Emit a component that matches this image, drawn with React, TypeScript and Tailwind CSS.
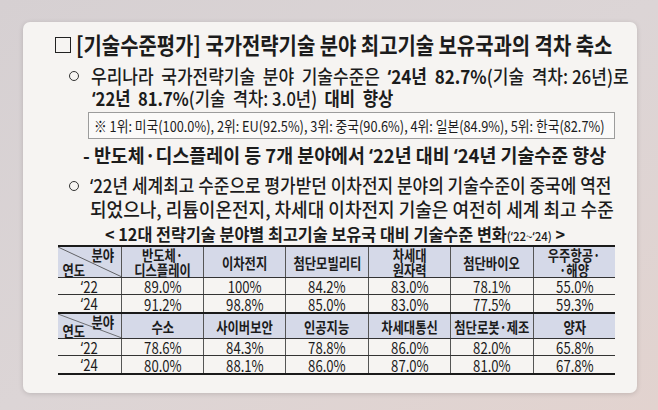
import type { ReactNode } from 'react';

const FONT = '"Noto Sans CJK KR", "Noto Sans", sans-serif';

// CJK font draws ‘ full-width, so the quote takes a latin face
function Q() {
  return <span className="font-['Noto_Sans']">‘</span>;
}

// condensed text: Korean headline fonts in the source are narrow
function Cn({ children, className = '' }: { children: ReactNode; className?: string }) {
  return <span className={`inline-block whitespace-nowrap origin-left ${className}`}>{children}</span>;
}

function Cell({ children, className = '' }: { children: ReactNode; className?: string }) {
  return (
    <span className={`inline-block whitespace-nowrap text-center scale-x-[0.82] ${className}`}>{children}</span>
  );
}

function Circle() {
  return <span className="inline-block w-[10px] h-[10px] rounded-full border-[1.5px] border-[#333] shrink-0" />;
}

type Section = { heads: string[][]; y22: string[]; y24: string[]; tall: boolean };

const sections: Section[] = [
  {
    heads: [['반도체·', '디스플레이'], ['이차전지'], ['첨단모빌리티'], ['차세대', '원자력'], ['첨단바이오'], ['우주항공·', '·해양']],
    y22: ['89.0%', '100%', '84.2%', '83.0%', '78.1%', '55.0%'],
    y24: ['91.2%', '98.8%', '85.0%', '83.0%', '77.5%', '59.3%'],
    tall: true,
  },
  {
    heads: [['수소'], ['사이버보안'], ['인공지능'], ['차세대통신'], ['첨단로봇·제조'], ['양자']],
    y22: ['78.6%', '84.3%', '78.8%', '86.0%', '82.0%', '65.8%'],
    y24: ['80.0%', '88.1%', '86.0%', '87.0%', '81.0%', '67.8%'],
    tall: false,
  },
];

const widths = ['w-[82px]', 'w-[82px]', 'w-[83px]', 'w-[82px]', 'w-[83px]', 'w-[81px]'];

function DataTable() {
  return (
    <div className="ml-[35px] w-[557px] border-t-2 border-b-2 border-[#1a1a1a]">
      {sections.map((s, si) => (
        <div key={si} className={si > 0 ? 'border-t-2 border-[#1a1a1a]' : ''}>
          <div className={`flex bg-[#d5d9e8] border-b border-[#333] ${s.tall ? 'h-[31px]' : 'h-[25px]'}`}>
            <div className="relative w-[64px] shrink-0 border-r border-[#555]">
              <svg className="absolute inset-0" width="64" height="100%" preserveAspectRatio="none" viewBox="0 0 64 30">
                <line x1="0" y1="0" x2="64" y2="30" stroke="#444" strokeWidth="0.8" />
              </svg>
              <span className="absolute right-[4px] top-0 text-[15px] font-bold leading-[15px]">
                <Cell>분야</Cell>
              </span>
              <span className="absolute left-[2px] bottom-0 text-[15px] font-bold leading-[15px]">
                <Cell>연도</Cell>
              </span>
            </div>
            {s.heads.map((h, i) => (
              <div
                key={i}
                className={`${widths[i]} shrink-0 flex items-center justify-center text-[15px] font-bold leading-[15px] ${i < 5 ? 'border-r border-[#555]' : ''}`}
              >
                <Cell>
                  {h[0]}
                  {h[1] && (
                    <>
                      <br />
                      {h[1]}
                    </>
                  )}
                </Cell>
              </div>
            ))}
          </div>
          {(['22', '24'] as const).map((yr, ri) => (
            <div key={yr} className={`flex h-[17px] ${ri === 0 ? 'border-b border-[#333]' : ''}`}>
              <div className="w-[64px] shrink-0 border-r border-[#555] flex items-center justify-center text-[16px] leading-none">
                <Cell><Q />{yr}</Cell>
              </div>
              {(ri === 0 ? s.y22 : s.y24).map((v, i) => (
                <div
                  key={i}
                  className={`${widths[i]} shrink-0 flex items-center justify-center text-[16px] leading-none ${i < 5 ? 'border-r border-[#555]' : ''}`}
                >
                  <Cell>{v}</Cell>
                </div>
              ))}
            </div>
          ))}
        </div>
      ))}
    </div>
  );
}

export default function App() {
  return (
    <div
      className="w-[658px] h-[410px] overflow-hidden bg-gradient-to-br from-[#d6d0d2] via-[#dcd5d6] to-[#e2d3cf] pt-[22px] pl-[23px]"
      style={{ fontFamily: FONT }}
    >
      <div className="w-[614px] h-[371px] rounded-[7px] bg-[#f6f4f2] shadow-[0_1px_5px_rgba(0,0,0,0.15)] pt-[9px] text-[#1c1c1c]">
        {/* title */}
        <div className="flex items-center h-[27px] pl-[32px]">
          <span className="inline-block w-[16px] h-[16px] border-[1.5px] border-[#222] mr-[5px] shrink-0" />
          <Cn className="text-[23px] font-bold leading-[27px] scale-x-[0.865]">
            [기술수준평가] 국가전략기술 분야 최고기술 보유국과의 격차 축소
          </Cn>
        </div>

        {/* bullet 1 */}
        <div className="mt-[7px] flex items-center h-[22px] pl-[46px]">
          <Circle />
          <Cn className="ml-[12px] text-[19px] font-medium leading-[22px] scale-x-[0.895]">
            우리나라&nbsp; 국가전략기술&nbsp; 분야&nbsp; 기술수준은&nbsp; <b><Q />24년&nbsp; 82.7%</b>(기술&nbsp; 격차: 26년)로
          </Cn>
        </div>
        <div className="flex items-center h-[22px] pl-[69px]">
          <Cn className="text-[19px] font-medium leading-[22px] scale-x-[0.874]">
            <b><Q />22년&nbsp; 81.7%</b>(기술&nbsp; 격차: 3.0년)&nbsp; <b>대비&nbsp; 향상</b>
          </Cn>
        </div>

        {/* ranking box */}
        <div className="mt-[3px] ml-[65px] w-[527px] h-[27px] border border-[#9c9c9c] bg-[#fbfaf9] flex items-center pl-[5px]">
          <Cn className="text-[15px] leading-[20px] scale-x-[0.85]">
            ※ 1위: 미국(100.0%), 2위: EU(92.5%), 3위: 중국(90.6%), 4위: 일본(84.9%), 5위: 한국(82.7%)
          </Cn>
        </div>

        {/* dash line */}
        <div className="mt-[5px] flex items-center h-[22px] pl-[60px]">
          <Cn className="text-[19px] font-bold leading-[22px] scale-x-[0.967]">
            - 반도체·디스플레이 등 7개 분야에서 <Q />22년 대비 <Q />24년 기술수준 향상
          </Cn>
        </div>

        {/* bullet 2 */}
        <div className="mt-[8px] flex items-center h-[23px] pl-[46px]">
          <Circle />
          <Cn className="ml-[11px] text-[19px] font-medium leading-[23px] scale-x-[0.893]">
            <Q />22년 세계최고 수준으로 평가받던 이차전지 분야의 기술수준이 중국에 역전
          </Cn>
        </div>
        <div className="flex items-center h-[23px] pl-[67px]">
          <Cn className="text-[19px] font-medium leading-[23px] scale-x-[0.948]">
            되었으나, 리튬이온전지, 차세대 이차전지 기술은 여전히 세계 최고 수준
          </Cn>
        </div>

        {/* caption */}
        <div className="mt-[4px] flex items-center h-[21px] pl-[82px]">
          <Cn className="text-[17px] font-bold leading-[21px] scale-x-[0.955]">
            &lt; 12대 전략기술 분야별 최고기술 보유국 대비 기술수준 변화
            <span className="text-[12px] font-medium">(<Q />22~<Q />24)</span> &gt;
          </Cn>
        </div>

        <DataTable />
      </div>
    </div>
  );
}
